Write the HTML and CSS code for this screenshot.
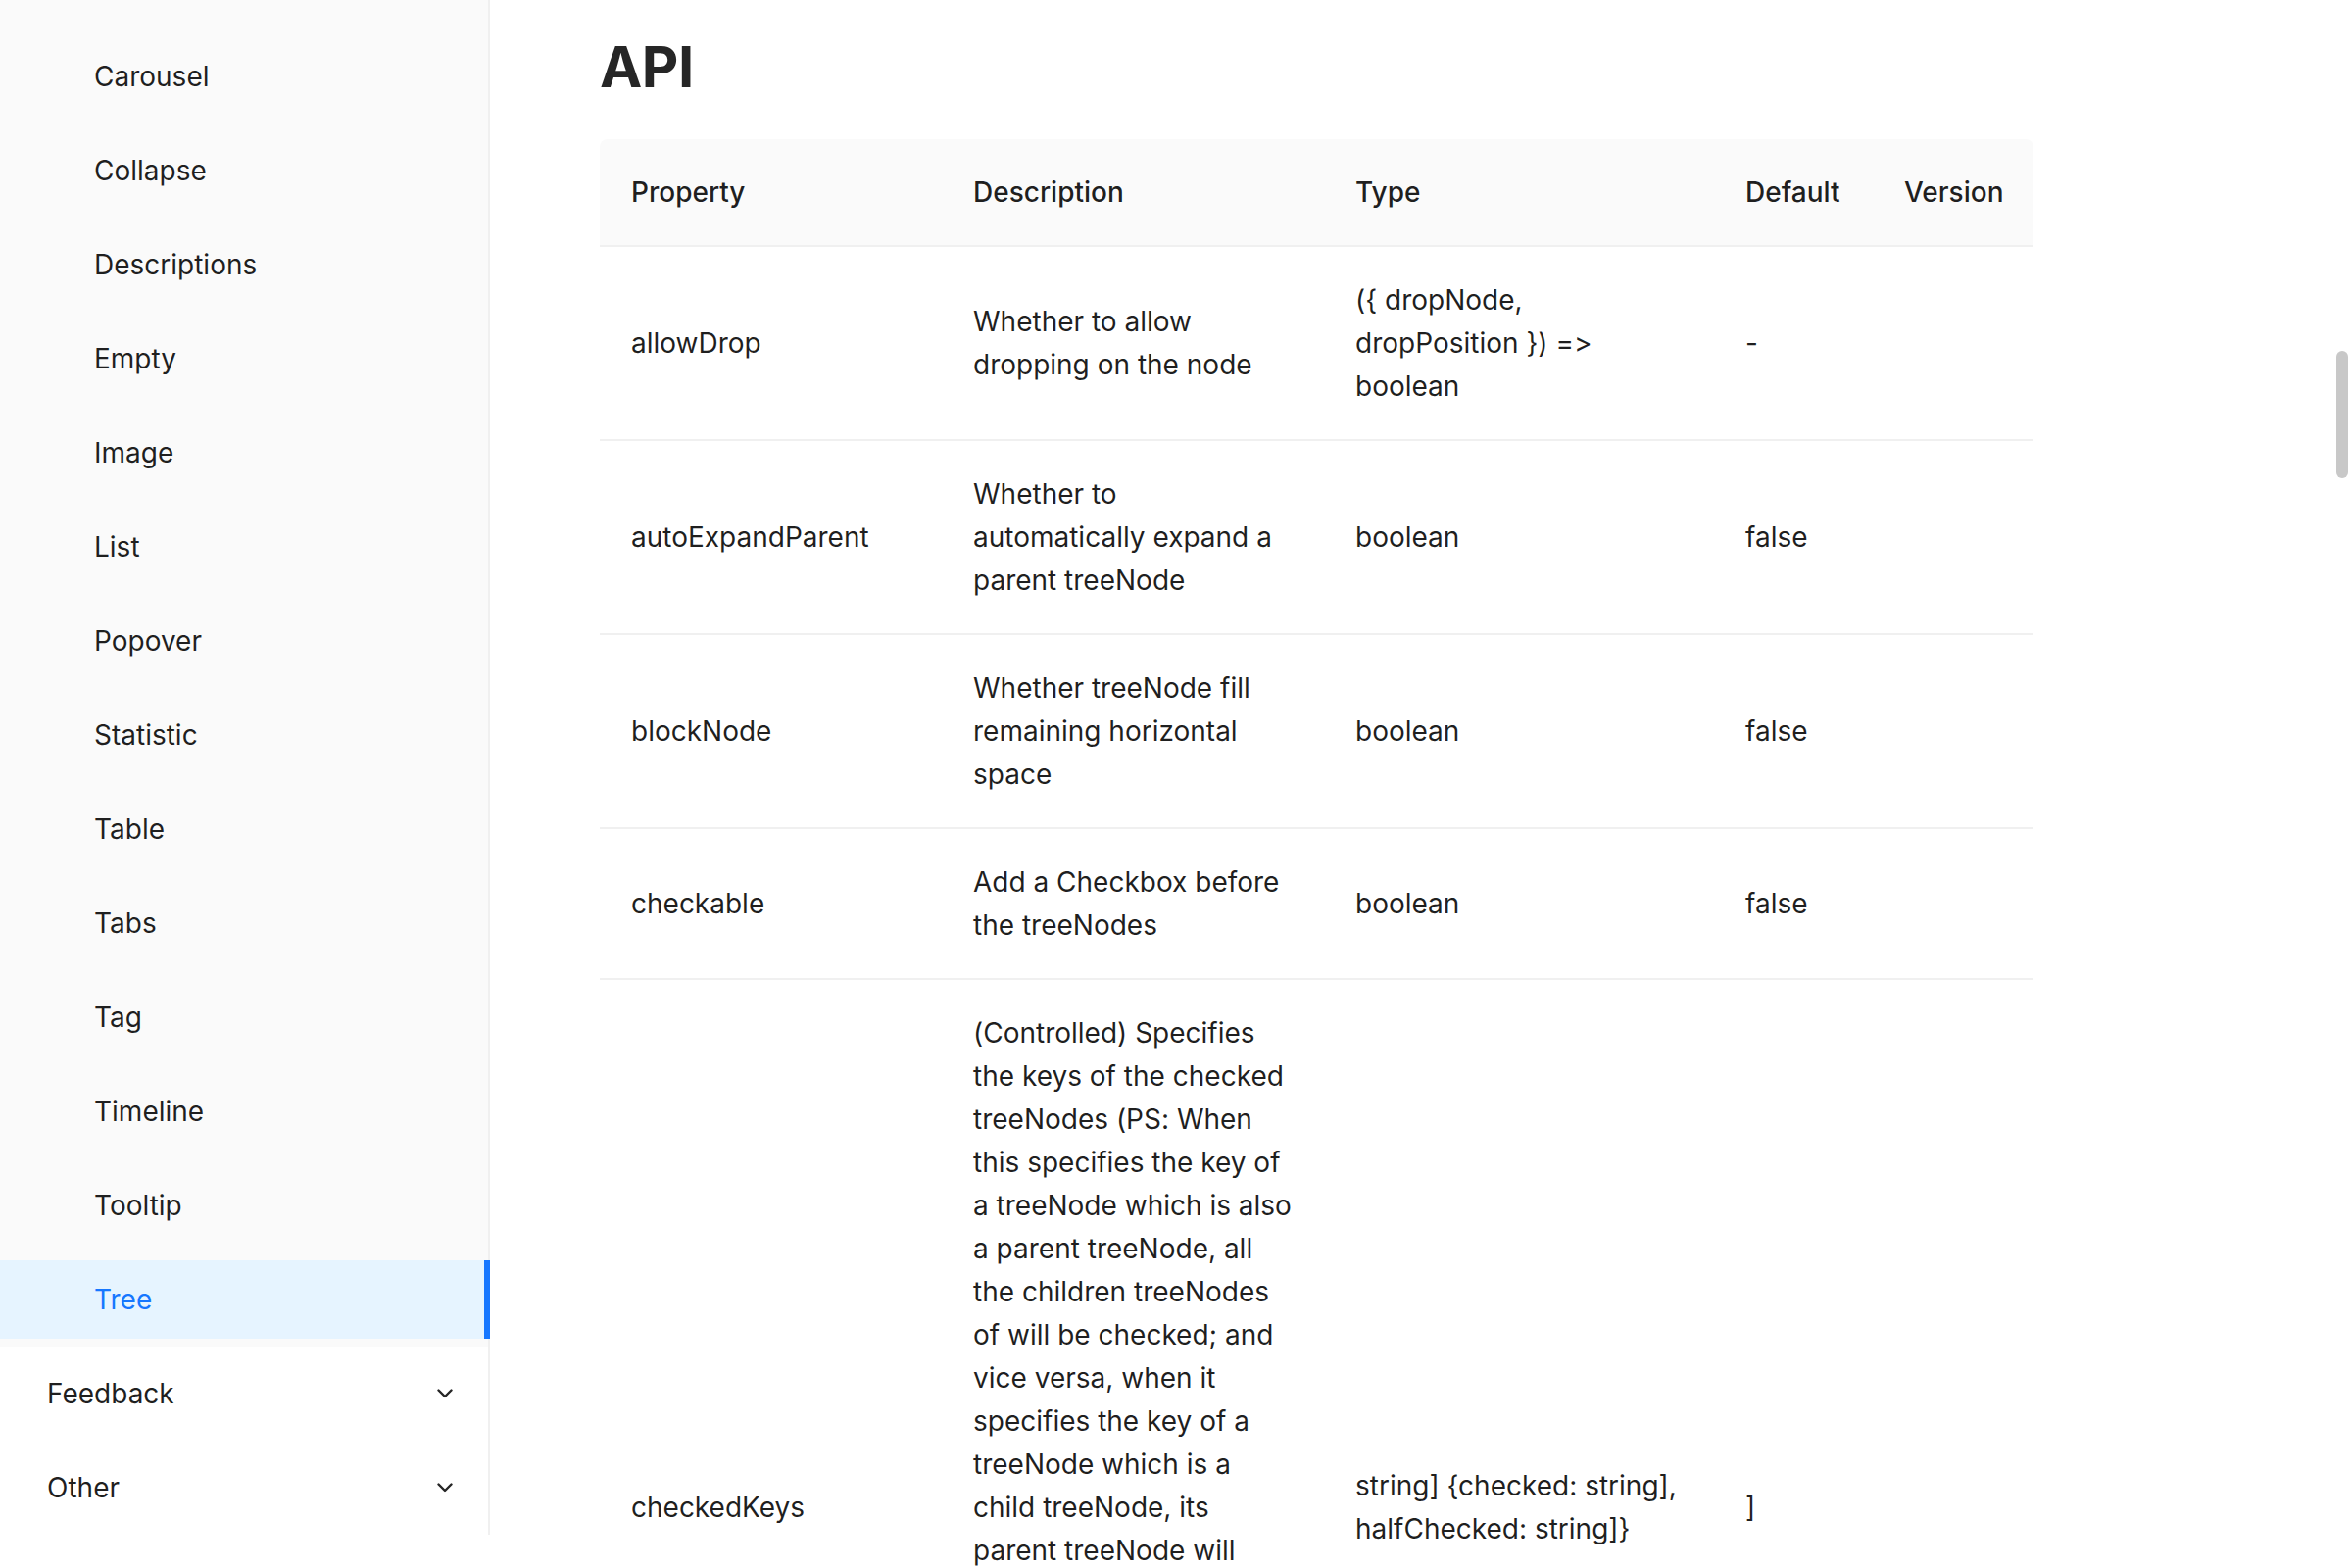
FILE: index.html
```html
<!DOCTYPE html>
<html lang="en">
<head>
<meta charset="utf-8">
<title>Tree - API</title>
<link rel="stylesheet" href="styles.css">
</head>
<body>
<div class="layout">
  <aside class="sidebar">
    <nav class="menu">
      <ul class="submenu-list">
        <li class="menu-item sub">Carousel</li>
        <li class="menu-item sub">Collapse</li>
        <li class="menu-item sub">Descriptions</li>
        <li class="menu-item sub">Empty</li>
        <li class="menu-item sub">Image</li>
        <li class="menu-item sub">List</li>
        <li class="menu-item sub">Popover</li>
        <li class="menu-item sub">Statistic</li>
        <li class="menu-item sub">Table</li>
        <li class="menu-item sub">Tabs</li>
        <li class="menu-item sub">Tag</li>
        <li class="menu-item sub">Timeline</li>
        <li class="menu-item sub">Tooltip</li>
        <li class="menu-item sub selected">Tree</li>
      </ul>
      <ul class="top-list">
        <li class="menu-item top"><span>Feedback</span>
          <svg class="chev" viewBox="0 0 16 10" width="16" height="10"><path d="M1.5 1.5 L8 8 L14.5 1.5" fill="none" stroke="#262626" stroke-width="2.4" stroke-linecap="round" stroke-linejoin="round"/></svg>
        </li>
        <li class="menu-item top"><span>Other</span>
          <svg class="chev" viewBox="0 0 16 10" width="16" height="10"><path d="M1.5 1.5 L8 8 L14.5 1.5" fill="none" stroke="#262626" stroke-width="2.4" stroke-linecap="round" stroke-linejoin="round"/></svg>
        </li>
      </ul>
    </nav>
  </aside>
  <main class="content">
    <h2 class="title">API</h2>
    <table class="api-table">
      <colgroup>
        <col class="c-prop"><col class="c-desc"><col class="c-type"><col class="c-def"><col class="c-ver">
      </colgroup>
      <thead>
        <tr><th>Property</th><th>Description</th><th>Type</th><th>Default</th><th>Version</th></tr>
      </thead>
      <tbody>
        <tr>
          <td>allowDrop</td>
          <td>Whether to allow<br>dropping on the node</td>
          <td>({ dropNode,<br>dropPosition }) =&gt;<br>boolean</td>
          <td>-</td>
          <td></td>
        </tr>
        <tr>
          <td>autoExpandParent</td>
          <td>Whether to<br>automatically expand a<br>parent treeNode</td>
          <td>boolean</td>
          <td>false</td>
          <td></td>
        </tr>
        <tr>
          <td>blockNode</td>
          <td>Whether treeNode fill<br>remaining horizontal<br>space</td>
          <td>boolean</td>
          <td>false</td>
          <td></td>
        </tr>
        <tr>
          <td>checkable</td>
          <td>Add a Checkbox before<br>the treeNodes</td>
          <td>boolean</td>
          <td>false</td>
          <td></td>
        </tr>
        <tr>
          <td>checkedKeys</td>
          <td>(Controlled) Specifies<br>the keys of the checked<br>treeNodes (PS: When<br>this specifies the key of<br>a treeNode which is also<br>a parent treeNode, all<br>the children treeNodes<br>of will be checked; and<br>vice versa, when it<br>specifies the key of a<br>treeNode which is a<br>child treeNode, its<br>parent treeNode will<br>also be checked. When<br>checkable and<br>checkStrictly is true,<br>its object has checked<br>and halfChecked<br>property. Regardless of<br>whether the child or<br>parent treeNode is<br>checked, they won't<br>impact each other.</td>
          <td>string] {checked: string],<br>halfChecked: string]}</td>
          <td>]</td>
          <td></td>
        </tr>
      </tbody>
    </table>
  </main>
  <div class="scroll-thumb"></div>
</div>
</body>
</html>
```
FILE: styles.css
```css
* { box-sizing: border-box; }

html, body {
  margin: 0;
  padding: 0;
  height: 100%;
  overflow: hidden;
  background: #ffffff;
}

body {
  font-family: Inter, "Noto Sans", "Liberation Sans", sans-serif;
  font-size: 28px;
  line-height: 44px;
  color: rgba(0, 0, 0, 0.88);
  font-variant-ligatures: none;
  font-feature-settings: "liga" 0, "calt" 0;
}

.layout {
  position: relative;
  display: flex;
  height: 100vh;
  overflow: hidden;
}

.sidebar {
  flex: 0 0 500px;
  width: 500px;
}

.menu {
  border-right: 2px solid #f0f0f0;
}

.submenu-list,
.top-list {
  list-style: none;
  margin: 0;
  display: flex;
  flex-direction: column;
  gap: 16px;
}

.submenu-list {
  background: #fafafa;
  padding: 38px 0 8px;
}

.top-list {
  background: #ffffff;
  padding: 8px 0;
}

.menu-item {
  height: 80px;
  line-height: 80px;
  white-space: nowrap;
  position: relative;
}

.menu-item.sub {
  padding-left: 96px;
}

.menu-item.top {
  padding: 0 36px 0 48px;
  display: flex;
  align-items: center;
  justify-content: space-between;
}

.chev {
  display: block;
}

.menu-item.selected {
  background: #e6f4ff;
  color: #1677ff;
}

.menu-item.selected::after {
  content: "";
  position: absolute;
  top: 0;
  bottom: 0;
  right: -2px;
  width: 6px;
  background: #1677ff;
}

.content {
  flex: 1 1 auto;
  padding: 28px 0 0 112px;
}

.title {
  margin: 0 0 34px;
  font-size: 58px;
  line-height: 80px;
  font-weight: 700;
  color: rgba(0, 0, 0, 0.85);
  letter-spacing: -0.5px;
}

.api-table {
  width: 1463px;
  table-layout: fixed;
  border-collapse: collapse;
  border-spacing: 0;
}

.c-prop { width: 349px; }
.c-desc { width: 390px; }
.c-type { width: 398px; }
.c-def { width: 162px; }
.c-ver { width: 164px; }

.api-table th,
.api-table td {
  padding: 32px;
  text-align: left;
  vertical-align: middle;
  white-space: nowrap;
  border-bottom: 2px solid #f0f0f0;
}

.api-table th {
  background: #fafafa;
  font-weight: 500;
  color: rgba(0, 0, 0, 0.88);
}

.api-table thead th:first-child { border-top-left-radius: 8px; }
.api-table thead th:last-child { border-top-right-radius: 8px; }

.scroll-thumb {
  position: absolute;
  left: 2384px;
  top: 358px;
  width: 12px;
  height: 130px;
  border-radius: 6px;
  background: #c8c8c8;
}
```
